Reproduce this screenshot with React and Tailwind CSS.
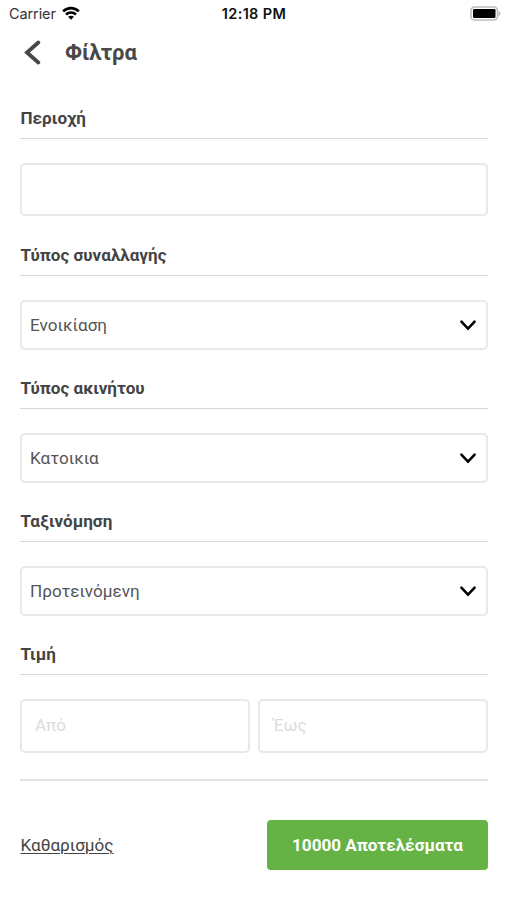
import clsx from "clsx";

const selects = [
  { title: "Τύπος συναλλαγής", value: "Ενοικίαση" },
  { title: "Τύπος ακινήτου", value: "Κατοικια" },
  { title: "Ταξινόμηση", value: "Προτεινόμενη" },
];

function StatusBar() {
  return (
    <div className="grid h-7 grid-cols-3 items-center pl-[9px] pr-[6px] font-['Inter',sans-serif] text-black">
      <div className="flex items-center gap-[6px]">
        <span className="text-[14.5px] leading-none tracking-[-0.1px] text-[#333]">Carrier</span>
        <svg className="-mt-[2px]" width="18" height="14" viewBox="0 0 19 14" fill="none" stroke="#000" strokeWidth="2.7">
          <path d="M1.2 5.3C5.9 0.7 13.1 0.7 17.8 5.3" />
          <path d="M4.2 8.6C7.2 5.7 11.8 5.7 14.8 8.6" />
          <path d="M9.5 14L6.4 10.9C8.1 9.4 10.9 9.4 12.6 10.9Z" fill="#000" stroke="none" />
        </svg>
      </div>
      <span className="pr-[2px] text-center text-[14.5px] font-semibold leading-none tracking-[0.35px] text-[#111]">
        12:18 PM
      </span>
      <svg className="-mt-px justify-self-end" width="31" height="15" viewBox="0 0 31 15">
        <rect x="1" y="1" width="26.5" height="13" rx="3.5" fill="#fff" stroke="#bdbdbd" strokeWidth="1.6" />
        <rect x="3" y="3" width="22.5" height="9" rx="1.2" fill="#000" />
        <path d="M28.8 5.2C30.9 6 30.9 9 28.8 9.8Z" fill="#aaa" />
      </svg>
    </div>
  );
}

function Section({ title, className, children }) {
  return (
    <section className={clsx("flex flex-col gap-6", className)}>
      <h2 className="h-8 border-b-[1.5px] border-[#d6d6d6] pl-[0.5px] text-[17.1px] font-bold leading-[23px] text-[#444]">
        {title}
      </h2>
      {children}
    </section>
  );
}

function SelectBox({ value }) {
  return (
    <button className="flex h-[50px] w-full items-center justify-between rounded-[5px] border-2 border-[#e8e8e8] pl-2 pr-[9px] pt-px text-[17.1px] text-[#555]">
      <span>{value}</span>
      <svg width="18" height="14" viewBox="0 0 18 14" fill="none" stroke="#000" strokeWidth="2.5">
        <path d="M2.4 2.6L9 9.6L15.6 2.6" strokeLinecap="round" strokeLinejoin="miter" />
      </svg>
    </button>
  );
}

function PriceInput({ placeholder }) {
  return (
    <input
      className="h-[54px] min-w-0 flex-1 rounded-[5px] border-2 border-[#e8e8e8] px-[9px] pb-0.5 indent-1 text-[17px] leading-7 placeholder:text-[#dcdcdc]"
      placeholder={placeholder}
    />
  );
}

export default function App() {
  return (
    <div className="h-[900px] w-[507px] overflow-hidden bg-white font-['Roboto',sans-serif] text-[#444]">
      <StatusBar />

      <header className="flex h-[49px] items-center gap-[23px] pl-6">
        <svg width="18" height="26" viewBox="0 0 18 26" fill="none" stroke="#484848" strokeWidth="3.8">
          <path d="M14.3 2.5L3 12.5L14.3 22.5" strokeLinecap="round" />
        </svg>
        <h1 className="text-[22px] font-bold text-[#484848]">Φίλτρα</h1>
      </header>

      <main className="pl-5 pr-[19px] pt-[30px]">
        <Section title="Περιοχή" className="h-[137px]">
          <input className="h-[53px] w-full rounded-[5px] border-2 border-[#e8e8e8] px-2 text-[17px]" />
        </Section>

        {selects.map(({ title, value }) => (
          <Section key={title} title={title} className="h-[133px]">
            <SelectBox value={value} />
          </Section>
        ))}

        <Section title="Τιμή" className="h-[136px]">
          <div className="flex gap-2">
            <PriceInput placeholder="Από" />
            <PriceInput placeholder="Έως" />
          </div>
        </Section>

        <footer className="flex items-center justify-between border-t-2 border-[#e2e2e2] pt-[39px]">
          <button className="pl-[0.5px] pt-px text-[17.1px] underline decoration-1 underline-offset-2">
            Καθαρισμός
          </button>
          <button className="h-[50px] w-[221px] rounded-[4px] bg-[#65b245] pt-0.5 text-[17.1px] font-bold text-white">
            10000 Αποτελέσματα
          </button>
        </footer>
      </main>
    </div>
  );
}
